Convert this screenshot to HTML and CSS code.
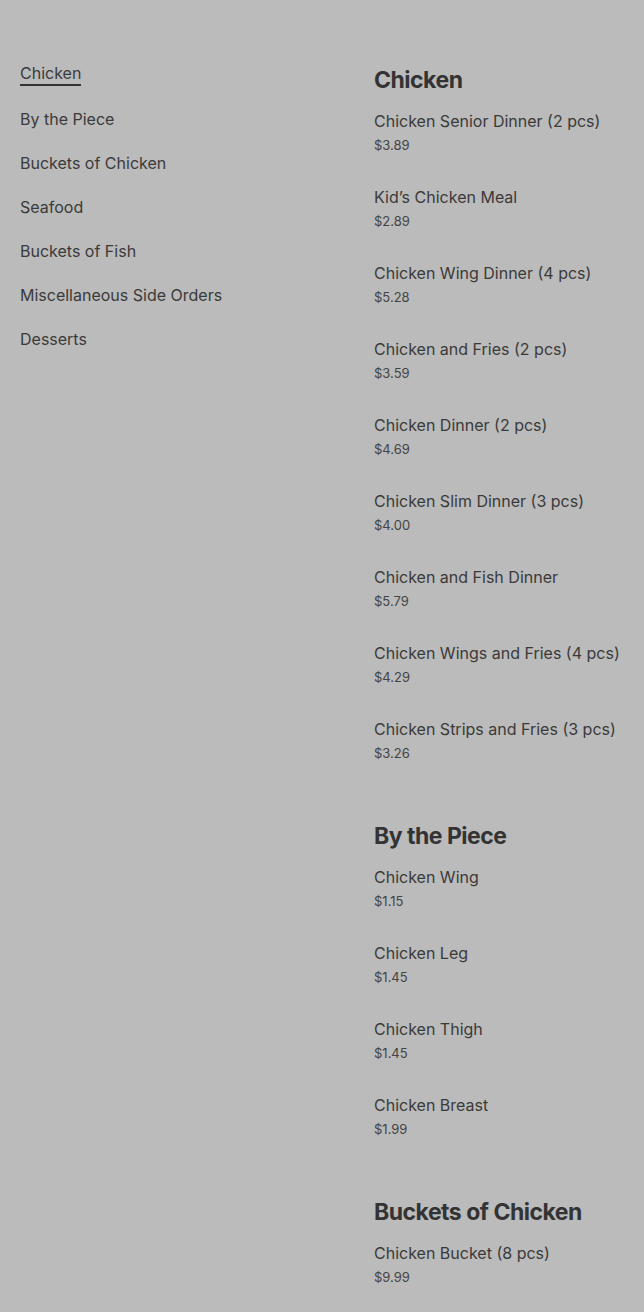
FILE: index.html
```html
<!DOCTYPE html>
<html lang="en">
<head>
    <meta charset="UTF-8">
    <meta name="viewport" content="width=device-width, initial-scale=1.0">
    <title>Menu</title>
    <link rel="stylesheet" href="styles.css">
</head>
<body>

    <div class="page">
        <nav class="menu-nav">
            <a class="nav-link active" href="#chicken"><span>Chicken</span></a>
            <a class="nav-link" href="#piece"><span>By the Piece</span></a>
            <a class="nav-link" href="#buckets"><span>Buckets of Chicken</span></a>
            <a class="nav-link" href="#seafood"><span>Seafood</span></a>
            <a class="nav-link" href="#fish"><span>Buckets of Fish</span></a>
            <a class="nav-link" href="#sides"><span>Miscellaneous Side Orders</span></a>
            <a class="nav-link" href="#desserts"><span>Desserts</span></a>
        </nav>

        <main class="menu-list">
            <section class="section" id="chicken">
                <h2>Chicken</h2>
                <div class="item"><p class="name">Chicken Senior Dinner (2 pcs)</p><p class="price">$3.89</p></div>
                <div class="item"><p class="name">Kid’s Chicken Meal</p><p class="price">$2.89</p></div>
                <div class="item"><p class="name">Chicken Wing Dinner (4 pcs)</p><p class="price">$5.28</p></div>
                <div class="item"><p class="name">Chicken and Fries (2 pcs)</p><p class="price">$3.59</p></div>
                <div class="item"><p class="name">Chicken Dinner (2 pcs)</p><p class="price">$4.69</p></div>
                <div class="item"><p class="name">Chicken Slim Dinner (3 pcs)</p><p class="price">$4.00</p></div>
                <div class="item"><p class="name">Chicken and Fish Dinner</p><p class="price">$5.79</p></div>
                <div class="item"><p class="name">Chicken Wings and Fries (4 pcs)</p><p class="price">$4.29</p></div>
                <div class="item"><p class="name">Chicken Strips and Fries (3 pcs)</p><p class="price">$3.26</p></div>
            </section>

            <section class="section" id="piece">
                <h2>By the Piece</h2>
                <div class="item"><p class="name">Chicken Wing</p><p class="price">$1.15</p></div>
                <div class="item"><p class="name">Chicken Leg</p><p class="price">$1.45</p></div>
                <div class="item"><p class="name">Chicken Thigh</p><p class="price">$1.45</p></div>
                <div class="item"><p class="name">Chicken Breast</p><p class="price">$1.99</p></div>
            </section>

            <section class="section" id="buckets">
                <h2>Buckets of Chicken</h2>
                <div class="item"><p class="name">Chicken Bucket (8 pcs)</p><p class="price">$9.99</p></div>
            </section>
        </main>
    </div>

</body>
</html>
```

FILE: styles.css
```css
body {
    margin: 0;
    background: #bbbbbb;
    font-family: Inter, "Noto Sans", sans-serif;
    color: #333333;
}

.page {
    display: grid;
    grid-template-columns: 354px 1fr;
    padding: 51px 0 0 20px;
}

.menu-nav {
    display: flex;
    flex-direction: column;
    align-items: flex-start;
}

.nav-link {
    display: block;
    padding: 11px 0 9px;
    font-size: 16px;
    line-height: 22px;
    color: #3a3a3a;
    text-decoration: none;
}

.nav-link span {
    display: inline-block;
    border-bottom: 2px solid transparent;
}

.nav-link.active {
    margin-bottom: 2px;
}

.nav-link.active span {
    border-bottom-color: #333333;
}

.menu-list {
    padding-top: 13px;
}

.section {
    padding-bottom: 27px;
}

.section h2 {
    margin: 0 0 13px;
    font-size: 23px;
    line-height: 32px;
    font-weight: 700;
    letter-spacing: -0.5px;
    color: #333333;
}

.item {
    margin-bottom: 32px;
}

.item p {
    margin: 0;
}

.name {
    font-size: 16px;
    line-height: 24px;
    color: #3a3a3a;
}

.price {
    margin-top: 4px !important;
    font-size: 13px;
    line-height: 16px;
    color: #444444;
}
```
